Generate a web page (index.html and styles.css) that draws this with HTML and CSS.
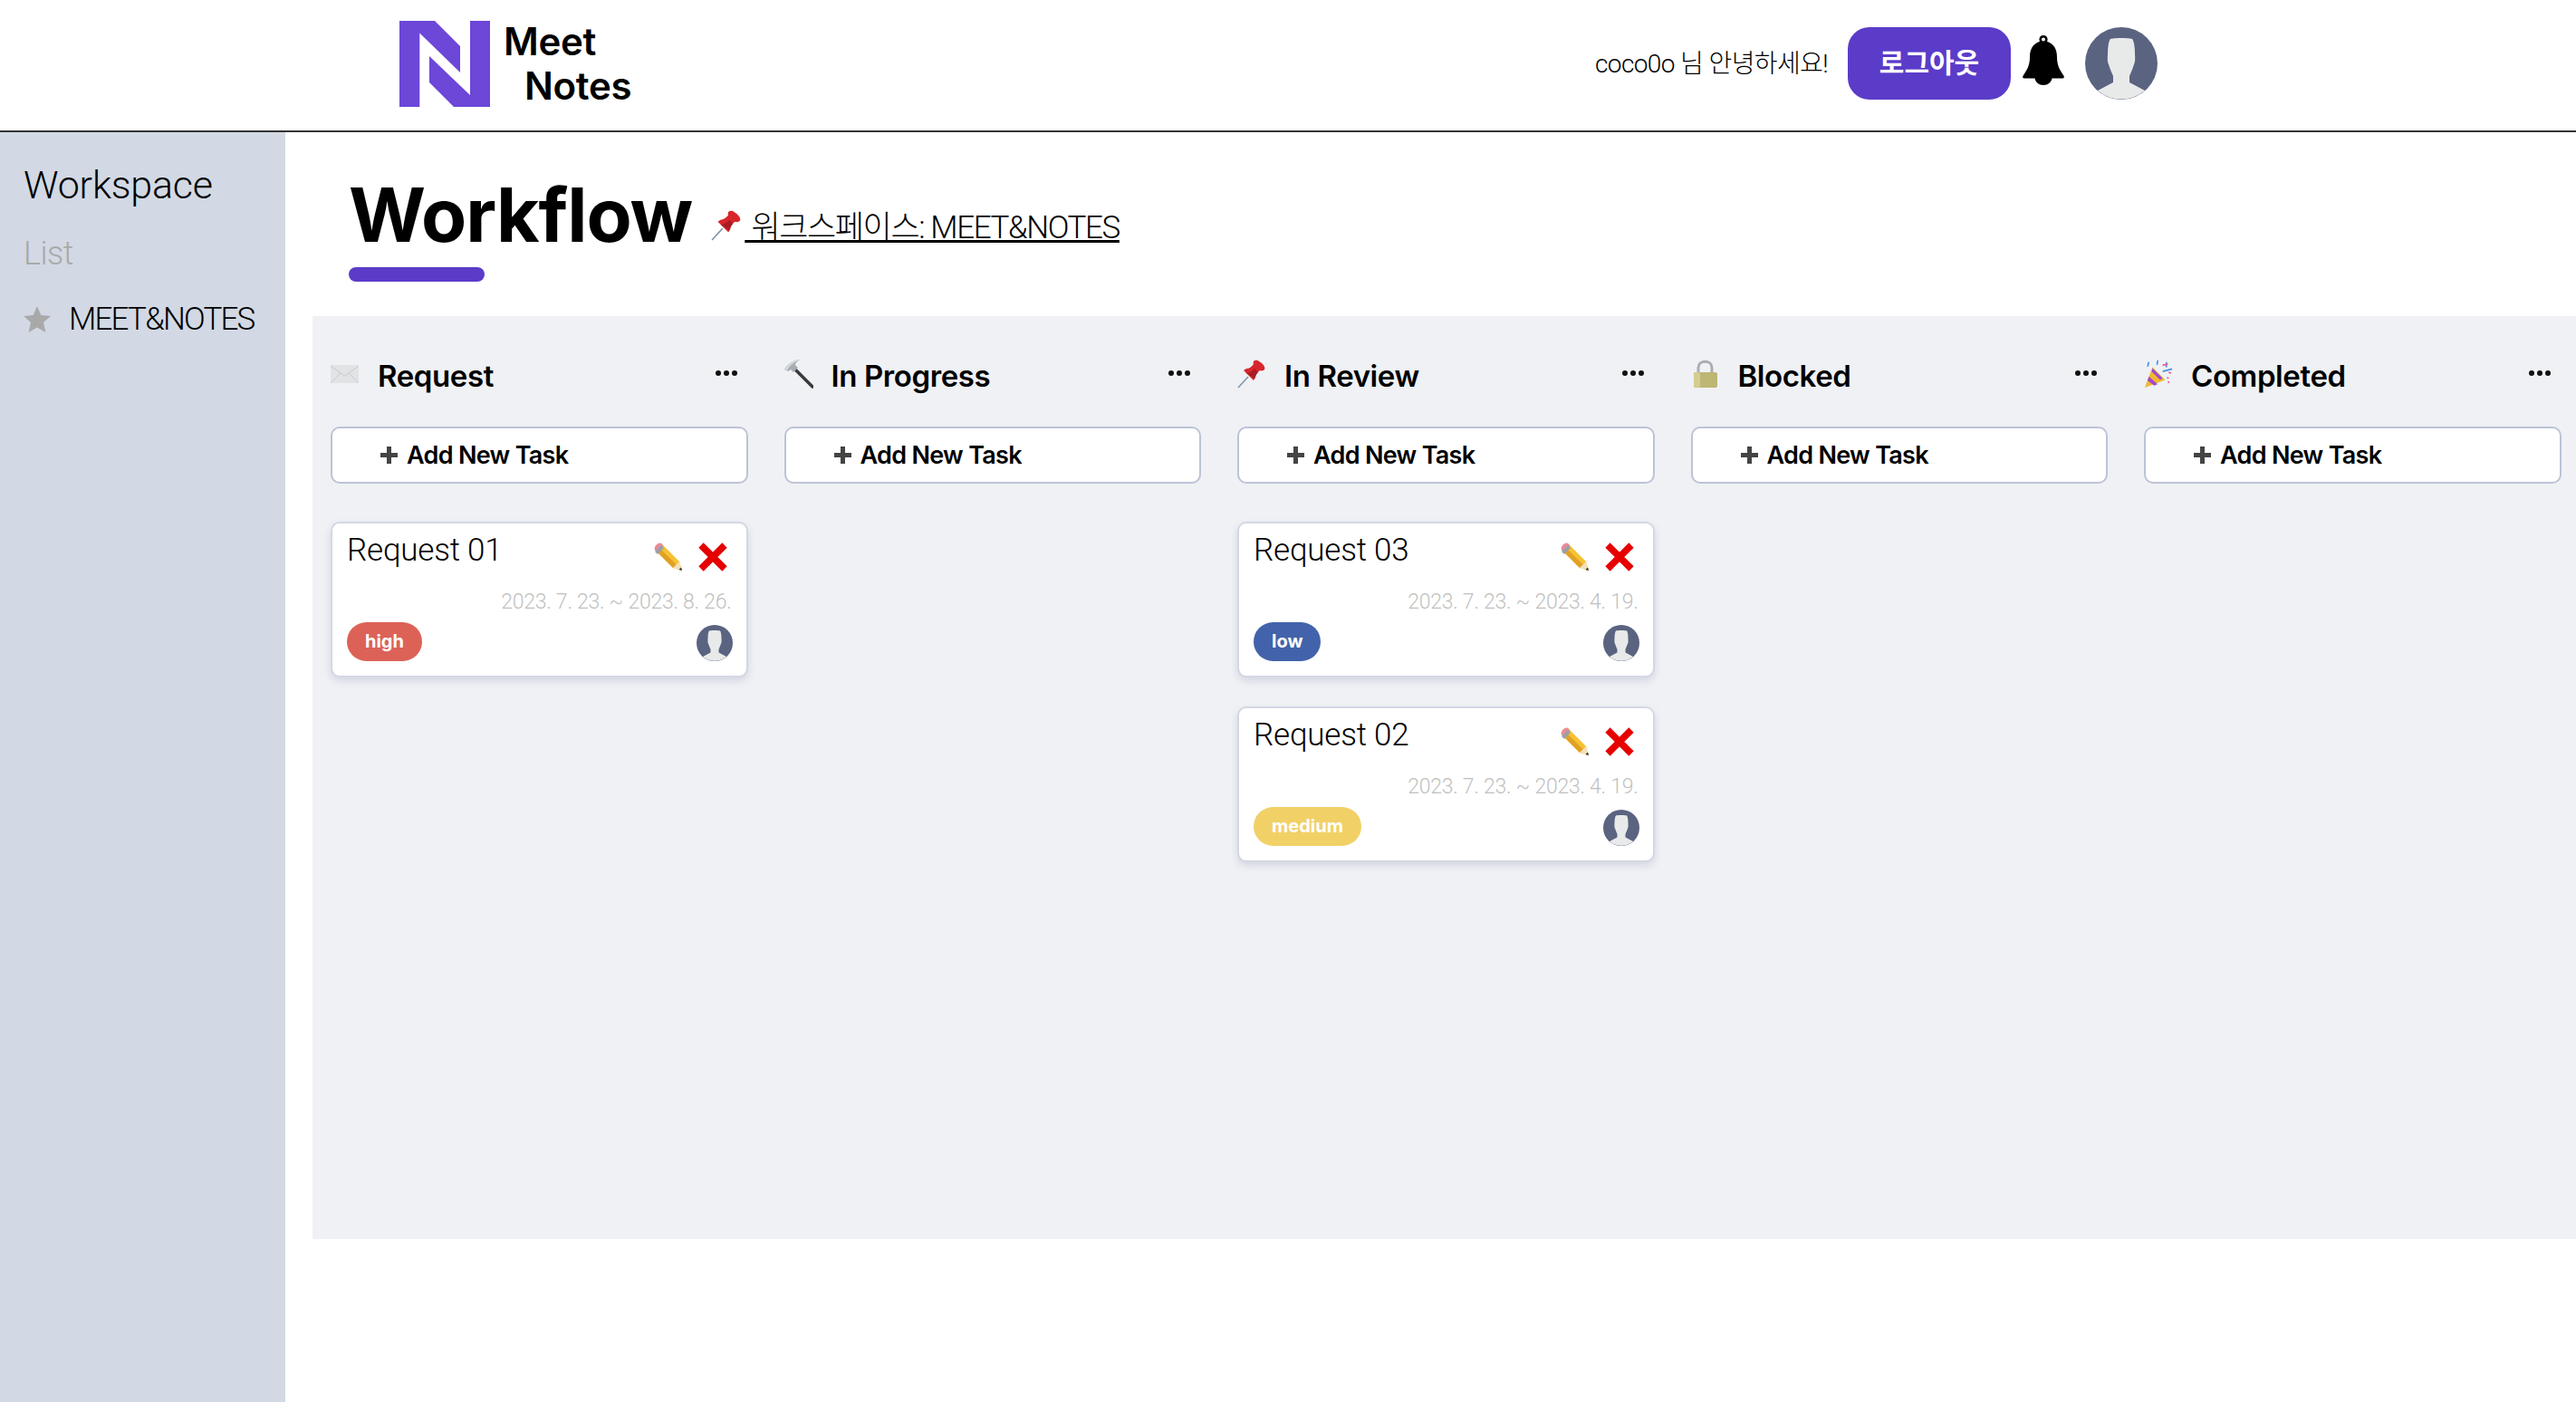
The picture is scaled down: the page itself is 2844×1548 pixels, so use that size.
FILE: index.html
```html
<!DOCTYPE html>
<html lang="ko">

<head>
    <meta charset="UTF-8">
    <title>Workflow</title>
    <link rel="stylesheet" href="styles.css">
</head>

<body>
    <!-- 공용 아이콘 -->
    <svg class="sprite" xmlns="http://www.w3.org/2000/svg">
        <symbol id="i-mail" viewBox="0 0 32 32">
            <rect x="0" y="6" width="31" height="20" fill="#e2e3e5"/>
            <path d="M0 7l15.500 11L31 7M0 26l11-11M31 26L20 15" fill="none" stroke="#c9cacd" stroke-width="1"/>
        </symbol>
        <symbol id="i-hammer" viewBox="0 0 32 32">
            <path d="M12 11l19 19" stroke="#3a3a3a" stroke-width="3.500" stroke-linecap="round"/>
            <path d="M0 11C3 5 9 1 17 0c-3 2-5 4-5 6l3 3-5 5-3-3-3 2z" fill="#a7adb3"/>
            <path d="M0 11C3 5 9 1 17 0C11 3 6 6 3 12z" fill="#d5d9dd"/>
        </symbol>
        <symbol id="i-pin" viewBox="0 0 32 32">
            <path d="M1 31l11-12" stroke="#7f93a8" stroke-width="1.500"/>
            <path d="M7 12l3-2c3 0 6-2 8-5-1-2 0-4 2-4 2-1 4 1 7 3 3 3 4 5 3 7-1 1-3 2-5 1-3 2-5 5-5 8l-2 3z" fill="#d8262c"/>
            <path d="M10 15c3 0 7-2 9-5l4 4c-2 2-3 4-4 7z" fill="#a81c22"/>
        </symbol>
        <symbol id="i-lock" viewBox="0 0 32 32">
            <path d="M8 16V9c0-9 15-9 15 0v7" fill="none" stroke="#a9adb3" stroke-width="3"/>
            <rect x="3" y="14" width="26" height="17" rx="2" fill="#bdb674"/>
            <rect x="3" y="14" width="7" height="17" rx="2" fill="#d3cd92"/>
        </symbol>
        <symbol id="i-party" viewBox="0 0 34 32">
            <path d="M1 32L10 8l15 15z" fill="#f2b82e"/>
            <path d="M6 19l10 9-4 1.500-8-6zM10 9l12 12-3 2L9 13z" fill="#a24bc9"/>
            <path d="M4 7c2-2 0-3 2-5M16 5c-2-2 1-3 0-5M26 2c2 2-2 3 1 6M22 13l11-3" fill="none" stroke="#4a90e2" stroke-width="1.800"/>
            <path d="M22 6c2-2 4 0 6-2M29 14l3 1M27 20l2 1M28 26l2-1" fill="none" stroke="#ec5f8e" stroke-width="1.800"/>
        </symbol>
        <symbol id="i-pencil" viewBox="0 0 32 32">
            <path d="M8 1l20 20 3 10-10-3L1 8z" fill="#f6c233"/>
            <path d="M4.500 4.500l24 23.500-7.500 0L1 8z" fill="#e0a125"/>
            <path d="M21 28l10 3-3-10z" fill="#f4e0bc"/>
            <path d="M27.500 30l3.500 1-1-3.500z" fill="#2f2f2f"/>
            <path d="M1 8C-1 5 5-1 8 1l2.500 2.500-7 7z" fill="#e88c96"/>
            <path d="M8 3l3 3-7 7-3-3z" fill="#9aa0a8"/>
        </symbol>
        <symbol id="i-cross" viewBox="0 0 32 32">
            <path d="M3 3l26 26M29 3L3 29" stroke="#e60000" stroke-width="7.500"/>
        </symbol>
        <symbol id="i-user" viewBox="0 0 80 80">
            <circle cx="40" cy="40" r="40" fill="#5a6380"/>
            <path d="M14 70l17-9v-7c-2-5-4-9-5-13-1-1-1.500-5-1-11 0-8 1-15 3-17 2-1.500 22-1.500 24 0 2 2 3 9 3 17 .5 6 0 10-1 11-1 4-3 8-5 13v7l17 9a40 40 0 0 1-52 0z" fill="#e8eaea"/>
        </symbol>
    </svg>

    <header class="topbar">
        <a class="logo">
            <svg class="logo-mark" viewBox="0 0 100 95">
                <path d="M0 0h39l28 28v29L22.300 13.500V95H0zM78 0h22v95H60L33 68V39l45 43z" fill="#6c47d8"/>
            </svg>
            <div class="logo-text">
                <div>Meet</div>
                <div class="logo-second">Notes</div>
            </div>
        </a>
        <div class="user-box">
            <span class="greeting">coco0o 님 안녕하세요!</span>
            <button class="logout">로그아웃</button>
            <svg class="bell" viewBox="0 0 46 55">
                <path fill-rule="evenodd" d="M23 0c-2.800 0-4.600 2-4.600 4.500 0 1 .2 1.600.6 2.300C11 9.500 8 16 8 24c0 9-3 14-7 20-1.500 2-.8 3.500 1 3.500h11.500c.5 4 4.500 7.500 9.500 7.500s9-3.500 9.500-7.500H44c1.800 0 2.500-1.500 1-3.500-4-6-7-11-7-20 0-8-3-14.500-11-17.200.4-.7.6-1.300.6-2.300C27.600 2 25.800 0 23 0zm0 2.600a2 2 0 1 1 0 4 2 2 0 0 1 0-4z"/>
            </svg>
            <svg class="avatar-lg"><use href="#i-user"/></svg>
        </div>
    </header>

    <div class="layout">
        <aside class="sidebar">
            <div class="side-title">Workspace</div>
            <div class="side-list">List</div>
            <div class="side-item">
                <svg class="star" viewBox="0 0 30 30">
                    <path d="M15 0l4.400 10 10.600 1-8 7 2.400 11L15 23.500 5.600 29 8 18l-8-7 10.600-1z" fill="#a9a9a9"/>
                </svg>
                <span>MEET&amp;NOTES</span>
            </div>
        </aside>

        <main class="content">
            <div class="page-head">
                <div class="title-row">
                    <h1 class="page-title">Workflow</h1>
                    <a class="space-link"><svg class="link-pin"><use href="#i-pin"/></svg> 워크스페이스: MEET&amp;NOTES</a>
                </div>
                <div class="title-bar"></div>
            </div>

            <section class="board">
                <div class="column">
                    <div class="col-head">
                        <svg class="col-icon"><use href="#i-mail"/></svg>
                        <span class="col-name">Request</span>
                        <span class="dots"><i></i><i></i><i></i></span>
                    </div>
                    <button class="add-task"><b class="plus"></b>Add New Task</button>
                    <div class="card">
                        <div class="card-top">
                            <span class="card-title">Request 01</span>
                            <svg class="pencil"><use href="#i-pencil"/></svg>
                            <svg class="cross"><use href="#i-cross"/></svg>
                        </div>
                        <div class="card-date">2023. 7. 23. ~ 2023. 8. 26.</div>
                        <div class="card-bottom">
                            <span class="tag tag-high">high</span>
                            <svg class="avatar-sm"><use href="#i-user"/></svg>
                        </div>
                    </div>
                </div>

                <div class="column">
                    <div class="col-head">
                        <svg class="col-icon"><use href="#i-hammer"/></svg>
                        <span class="col-name">In Progress</span>
                        <span class="dots"><i></i><i></i><i></i></span>
                    </div>
                    <button class="add-task"><b class="plus"></b>Add New Task</button>
                </div>

                <div class="column">
                    <div class="col-head">
                        <svg class="col-icon"><use href="#i-pin"/></svg>
                        <span class="col-name">In Review</span>
                        <span class="dots"><i></i><i></i><i></i></span>
                    </div>
                    <button class="add-task"><b class="plus"></b>Add New Task</button>
                    <div class="card">
                        <div class="card-top">
                            <span class="card-title">Request 03</span>
                            <svg class="pencil"><use href="#i-pencil"/></svg>
                            <svg class="cross"><use href="#i-cross"/></svg>
                        </div>
                        <div class="card-date">2023. 7. 23. ~ 2023. 4. 19.</div>
                        <div class="card-bottom">
                            <span class="tag tag-low">low</span>
                            <svg class="avatar-sm"><use href="#i-user"/></svg>
                        </div>
                    </div>
                    <div class="card">
                        <div class="card-top">
                            <span class="card-title">Request 02</span>
                            <svg class="pencil"><use href="#i-pencil"/></svg>
                            <svg class="cross"><use href="#i-cross"/></svg>
                        </div>
                        <div class="card-date">2023. 7. 23. ~ 2023. 4. 19.</div>
                        <div class="card-bottom">
                            <span class="tag tag-medium">medium</span>
                            <svg class="avatar-sm"><use href="#i-user"/></svg>
                        </div>
                    </div>
                </div>

                <div class="column">
                    <div class="col-head">
                        <svg class="col-icon"><use href="#i-lock"/></svg>
                        <span class="col-name">Blocked</span>
                        <span class="dots"><i></i><i></i><i></i></span>
                    </div>
                    <button class="add-task"><b class="plus"></b>Add New Task</button>
                </div>

                <div class="column">
                    <div class="col-head">
                        <svg class="col-icon"><use href="#i-party"/></svg>
                        <span class="col-name">Completed</span>
                        <span class="dots"><i></i><i></i><i></i></span>
                    </div>
                    <button class="add-task"><b class="plus"></b>Add New Task</button>
                </div>
            </section>
        </main>
    </div>
</body>

</html>
```

FILE: styles.css
```css
* {
    box-sizing: border-box;
}

body {
    margin: 0;
    background: #fff;
    color: #000;
    font-family: Roboto, "Noto Sans CJK KR", sans-serif;
    font-weight: 300;
    overflow: hidden;
}

.sprite {
    display: none;
}

/* 상단 */
.topbar {
    display: flex;
    align-items: center;
    justify-content: space-between;
    height: 146px;
    padding: 0 462px 4px 441px;
    border-bottom: 2px solid #333;
}

.logo {
    display: flex;
    align-items: center;
    gap: 15px;
}

.logo-mark {
    width: 100px;
    height: 95px;
}

.logo-text {
    font-family: Inter, sans-serif;
    font-size: 42px;
    font-weight: 600;
    line-height: 49px;
    letter-spacing: -.3px;
}

.logo-second {
    padding-left: 23px;
}

.user-box {
    display: flex;
    align-items: center;
}

.greeting {
    margin: 0 22px 5px 0;
    font-size: 28px;
    letter-spacing: -.6px;
}

.logout {
    width: 180px;
    height: 80px;
    margin-right: 13px;
    padding: 0 0 7px;
    border: 0;
    border-radius: 24px;
    background: #5b3cc9;
    color: #fff;
    font-family: "Noto Sans CJK KR", sans-serif;
    font-size: 30px;
    font-weight: 700;
}

.bell {
    width: 46px;
    height: 55px;
    margin: 0 23px 7px 0;
}

.avatar-lg {
    width: 80px;
    height: 80px;
}

/* 본문 */
.layout {
    display: flex;
    height: 1402px;
}

.sidebar {
    flex: none;
    width: 315px;
    padding: 28px 0 0 26px;
    background: #d2d9e4;
}

.side-title {
    font-size: 43px;
    line-height: 60px;
    letter-spacing: -.2px;
}

.side-list {
    margin-top: 16px;
    font-size: 36px;
    line-height: 60px;
    letter-spacing: -.5px;
    color: #a9a9a9;
}

.side-item {
    display: flex;
    align-items: center;
    gap: 20px;
    margin-top: 13px;
    font-size: 35px;
    line-height: 60px;
    letter-spacing: -1.8px;
}

.star {
    width: 30px;
    height: 30px;
}

.content {
    flex: 1;
    min-width: 0;
    padding-left: 30px;
}

.page-head {
    height: 203px;
    padding: 42px 0 0 40px;
}

.title-row {
    display: flex;
    align-items: flex-start;
    gap: 21px;
}

.page-title {
    margin: 0;
    font-family: Inter, sans-serif;
    font-size: 82px;
    font-weight: 700;
    line-height: 100px;
    letter-spacing: -1px;
}

.space-link {
    margin-top: 40px;
    font-size: 35px;
    line-height: 48px;
    letter-spacing: -1.400px;
    text-decoration: underline;
    text-decoration-thickness: 3px;
}

.link-pin {
    width: 34px;
    height: 34px;
    margin-right: 3px;
    vertical-align: -3px;
}

.title-bar {
    width: 150px;
    height: 16px;
    margin-top: 7px;
    border-radius: 8px;
    background: #5b3cc9;
}

.board {
    display: flex;
    gap: 40px;
    height: 1019px;
    padding: 48px 0 0 20px;
    background: #eff1f5;
}

.column {
    flex: none;
    width: 460.500px;
}

.col-head {
    display: flex;
    align-items: center;
    height: 32px;
    margin-bottom: 42px;
}

.col-icon {
    flex: none;
    width: 32px;
    height: 32px;
    margin-right: 20px;
}

.col-name {
    flex: 1;
    padding-top: 4px;
    font-family: Inter, sans-serif;
    font-size: 33px;
    font-weight: 600;
    letter-spacing: -.4px;
}

.dots {
    display: flex;
    gap: 3px;
    margin: 0 12px 0 0;
    padding-bottom: 3px;
}

.dots i {
    width: 6px;
    height: 6px;
    border-radius: 50%;
    background: #111;
}

.add-task {
    display: flex;
    align-items: center;
    width: 100%;
    height: 63px;
    margin-bottom: 42px;
    padding: 0 0 0 53px;
    border: 2px solid #bcc3d6;
    border-radius: 10px;
    background: #fff;
    color: #000;
    font-family: Inter, sans-serif;
    font-size: 27px;
    font-weight: 600;
    letter-spacing: -.7px;
}

.plus {
    width: 19px;
    height: 19px;
    margin-right: 10px;
    background: linear-gradient(#444, #444) center / 100% 5px no-repeat,
        linear-gradient(#444, #444) center / 5px 100% no-repeat;
}

.card {
    height: 172px;
    margin-bottom: 32px;
    padding: 7px 16px 15px;
    border: 2px solid #d3d7e4;
    border-radius: 10px;
    background: #fff;
    box-shadow: 0 4px 8px rgba(90, 100, 140, .18);
}

.card-top {
    display: flex;
    align-items: flex-start;
    height: 46px;
}

.card-title {
    flex: 1;
    margin-top: 2px;
    font-size: 35px;
    line-height: 42px;
    letter-spacing: -.2px;
}

.pencil {
    width: 32px;
    height: 32px;
    margin-top: 14px;
    margin-right: 17px;
}

.cross {
    width: 32px;
    height: 32px;
    margin-top: 14px;
    margin-right: 5px;
}

.card-date {
    margin-top: 20px;
    font-size: 23px;
    line-height: 28px;
    letter-spacing: -.25px;
    color: #bfbfbf;
    text-align: right;
}

.card-bottom {
    display: flex;
    align-items: flex-end;
    justify-content: space-between;
    margin-top: 8px;
}

.tag {
    height: 43px;
    padding: 0 20px;
    border-radius: 22px;
    color: #fff;
    font-family: Inter, sans-serif;
    font-size: 20px;
    font-weight: 700;
    line-height: 43px;
}

.tag-high {
    background: #dc6258;
}

.tag-low {
    background: #4263ab;
}

.tag-medium {
    background: #f1d166;
}

.avatar-sm {
    width: 40px;
    height: 40px;
    margin-right: -1px;
}
```
